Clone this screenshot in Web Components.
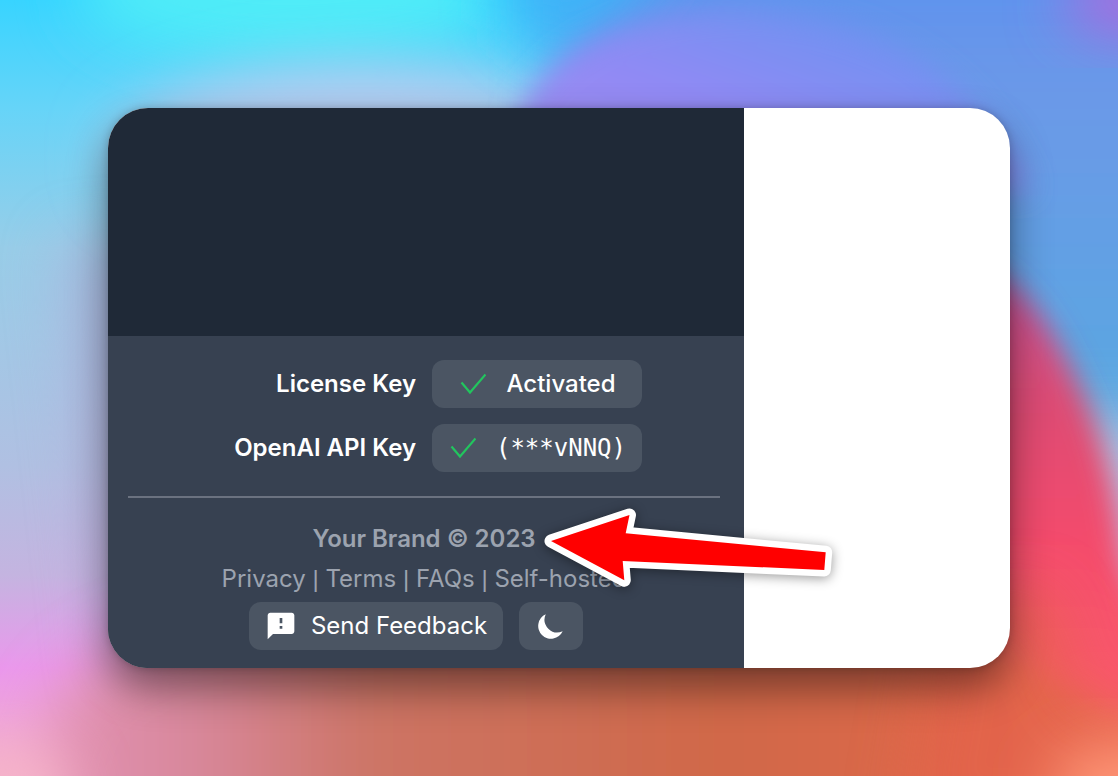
<!DOCTYPE html>
<html lang="en">
<head>
<meta charset="utf-8">
<meta name="viewport" content="width=device-width, initial-scale=1">
<title>Your Brand</title>
<style>
  body { margin: 0; font-family: Inter, "Liberation Sans", sans-serif; font-size: 24px; line-height: 40px; color: #fff; }
</style>
</head>
<body>
<brand-stage>
  <app-window>
    <side-footer slot="side">
      <key-row slot="keys" label="License Key">Activated</key-row>
      <key-row slot="keys" label="OpenAI API Key" mono>(***vNNQ)</key-row>
      <brand-links slot="brand"></brand-links>
    </side-footer>
  </app-window>
</brand-stage>

<script>
const define = (name, html, setup) => {
  const template = document.createElement('template');
  template.innerHTML = html;
  customElements.define(name, class extends HTMLElement {
    constructor() {
      super();
      this.attachShadow({ mode: 'open' }).append(template.content.cloneNode(true));
    }
    connectedCallback() { if (setup) setup(this, this.shadowRoot); }
  });
};

define('brand-stage', `
<style>
  :host { display: grid; position: relative; box-sizing: border-box; min-height: 100vh; padding: 108px; overflow: hidden; isolation: isolate; }
  svg { position: absolute; inset: 0; width: 100%; height: 100%; z-index: -1; }
</style>
<svg viewBox="0 0 1118 776" preserveAspectRatio="none" aria-hidden="true">
  <defs>
    <linearGradient id="left" x1="0" y1="0" x2="0" y2="1">
      <stop offset="0" stop-color="#38d4ff"/><stop offset=".14" stop-color="#66d4f8"/>
      <stop offset=".32" stop-color="#98cde8"/><stop offset=".6" stop-color="#b0c0e2"/>
      <stop offset=".74" stop-color="#c4b4e0"/><stop offset=".86" stop-color="#ea98ec"/><stop offset="1" stop-color="#f4b0c8"/>
    </linearGradient>
    <linearGradient id="blue" x1="0" y1="0" x2="0" y2="1">
      <stop offset="0" stop-color="#5890f0"/><stop offset=".3" stop-color="#6c98e8"/><stop offset="1" stop-color="#58a8e0"/>
    </linearGradient>
    <linearGradient id="purple" x1="0" y1="1" x2="1" y2="0">
      <stop offset="0" stop-color="#a88cf0"/><stop offset=".45" stop-color="#908af4"/><stop offset=".7" stop-color="#7890f2"/><stop offset="1" stop-color="#6090f0"/>
    </linearGradient>
    <linearGradient id="red" x1="0" y1="0" x2="0" y2="1">
      <stop offset="0" stop-color="#c45098"/><stop offset=".3" stop-color="#dc4c74"/>
      <stop offset=".6" stop-color="#f44c6c"/><stop offset="1" stop-color="#fc5c6c"/>
    </linearGradient>
    <linearGradient id="base" x1="0" y1="0" x2="1" y2="0">
      <stop offset="0" stop-color="#e494b8"/><stop offset=".14" stop-color="#d8889c"/>
      <stop offset=".3" stop-color="#cc7464"/><stop offset=".6" stop-color="#d06848"/>
      <stop offset=".85" stop-color="#e0664a"/><stop offset="1" stop-color="#f46c5c"/>
    </linearGradient>
    <filter id="b12" x="-50%" y="-50%" width="200%" height="200%"><feGaussianBlur stdDeviation="14"/></filter>
    <filter id="b30" x="-50%" y="-50%" width="200%" height="200%"><feGaussianBlur stdDeviation="30"/></filter>
  </defs>
  <rect width="1118" height="776" fill="url(#left)"/>
  <ellipse cx="290" cy="-10" rx="210" ry="70" fill="#50ecf8" filter="url(#b30)"/>
  <ellipse cx="360" cy="156" rx="250" ry="92" fill="#b8ccf0" filter="url(#b30)"/>
  <path d="M560-60H1200V420H560Z" fill="url(#blue)" filter="url(#b30)"/>
  <path d="M510-70H690L620 20L560 50L510 20Z" fill="#3cb4f8" filter="url(#b30)"/>
  <path d="M500 190C510 70 590 18 720 10C860 10 970 60 1030 190Z" fill="url(#purple)" filter="url(#b12)"/>
  <ellipse cx="1130" cy="0" rx="64" ry="34" fill="#b068dc" filter="url(#b30)"/>
  <path d="M60 240H300V700H110Z" fill="#b4a4d4" opacity=".5" filter="url(#b30)"/>
  <path d="M50 720C90 655 110 650 200 620H1180V860H30Z" fill="url(#base)" filter="url(#b30)"/>
  <path d="M930 260C1010 250 1050 320 1086 400C1106 450 1118 500 1124 560L1180 730C1110 720 1030 680 930 590Z" fill="url(#red)" filter="url(#b12)"/>
  <path d="M940 600L1050 590L1080 700L1200 730V840H900Z" fill="#e4644c" opacity=".7" filter="url(#b30)"/>
  <ellipse cx="1130" cy="790" rx="80" ry="46" fill="#ff9878" filter="url(#b30)"/>
  <ellipse cx="10" cy="800" rx="60" ry="50" fill="#f6b4cc" filter="url(#b30)"/>
</svg>
<slot></slot>`);

define('app-window', `
<style>
  :host { display: grid; grid-template-columns: minmax(0, 318fr) minmax(0, 133fr); border-radius: 40px; background: #fff; box-shadow: 0 20px 40px rgba(0,0,0,.45), 0 0 8px rgba(0,0,0,.2); }
  aside { display: flex; flex-direction: column; justify-content: flex-end; background: #1f2937; border-radius: 40px 0 0 40px; }
</style>
<aside><slot name="side"></slot></aside>
<main></main>`);

define('side-footer', `
<style>
  :host { display: block; padding: 24px 24px 18px 20px; background: #374151; border-radius: 0 0 0 40px; }
  .keys { display: grid; gap: 16px; justify-content: center; }
  hr { margin: 24px 0 21px; border: 0; height: 2px; background: #6b7280; }
</style>
<div class="keys"><slot name="keys"></slot></div>
<hr>
<slot name="brand"></slot>`);

define('key-row', `
<style>
  :host { display: grid; grid-template-columns: 210px 210px; gap: 16px; align-items: center; }
  label { text-align: right; font-weight: 600; white-space: nowrap; }
  button { display: flex; align-items: center; justify-content: center; gap: 20px; height: 48px; padding: 0; border: 0; border-radius: 12px; background: #4b5563; color: #fff; font: inherit; font-weight: 500; }
  :host([mono]) button { font-family: "DejaVu Sans Mono", "Liberation Mono", monospace; }
  svg { width: 28px; height: 28px; }
</style>
<label for="state"></label>
<button id="state" type="button">
  <svg viewBox="0 0 28 28" fill="none" stroke="#22c55e" stroke-width="2.2" aria-hidden="true"><path d="M3.500 12.500L12 22.500L27.500 4.500"/></svg>
  <span><slot></slot></span>
</button>`, (host, root) => { root.querySelector('label').textContent = host.getAttribute('label'); });

define('brand-links', `
<style>
  :host { display: block; position: relative; text-align: center; color: #9ca3af; white-space: nowrap; }
  p { margin: 0; }
  .brand { font-weight: 600; }
  a { color: inherit; text-decoration: none; }
  i { font-style: normal; font-family: "Liberation Sans", sans-serif; line-height: 1; }
  .actions { display: flex; justify-content: center; gap: 16px; padding: 3px 16px 0 0; }
  button { display: flex; align-items: center; gap: 14px; height: 48px; padding: 0 16px; border: 0; border-radius: 12px; background: #4b5563; color: #fff; font: inherit; }
  button svg { width: 32px; height: 32px; fill: #fff; }
  .arrow { position: absolute; top: -19px; left: calc(50% + 106px); width: 320px; height: 100px; overflow: visible; pointer-events: none; filter: drop-shadow(0 2px 6px rgba(0,0,0,.4)); }
</style>
<p class="brand">Your Brand © 2023</p>
<p><a href="#privacy">Privacy</a> <i>|</i> <a href="#terms">Terms</a> <i>|</i> <a href="#faqs">FAQs</a> <i>|</i> <a href="#self-hosted">Self-hosted</a></p>
<div class="actions">
  <button type="button">
    <svg viewBox="0 0 24 24" aria-hidden="true"><path d="M20 2H4c-1.100 0-1.990.9-1.990 2L2 22l4-4h14c1.100 0 2-.9 2-2V4c0-1.100-.9-2-2-2zm-7 12h-2v-2h2v2zm0-4h-2V6h2v4z"/></svg>
    Send Feedback
  </button>
  <button type="button" aria-label="Dark mode">
    <svg viewBox="0 0 20 20" aria-hidden="true"><path d="M17.293 13.293A8 8 0 016.707 2.707a8.001 8.001 0 1010.586 10.586z"/></svg>
  </button>
</div>
<svg class="arrow" viewBox="530 500 320 100" aria-hidden="true">
  <path d="M551 541L629.500 515L625.700 533.300L825.700 552.300L824.300 570L622.700 561L624.300 580.300Z" fill="#fff" stroke="#fff" stroke-width="13" stroke-linejoin="round"/>
  <path d="M551 541L629.500 515L625.700 533.300L825.700 552.300L824.300 570L622.700 561L624.300 580.300Z" fill="#f00"/>
</svg>`);
</script>
</body>
</html>
